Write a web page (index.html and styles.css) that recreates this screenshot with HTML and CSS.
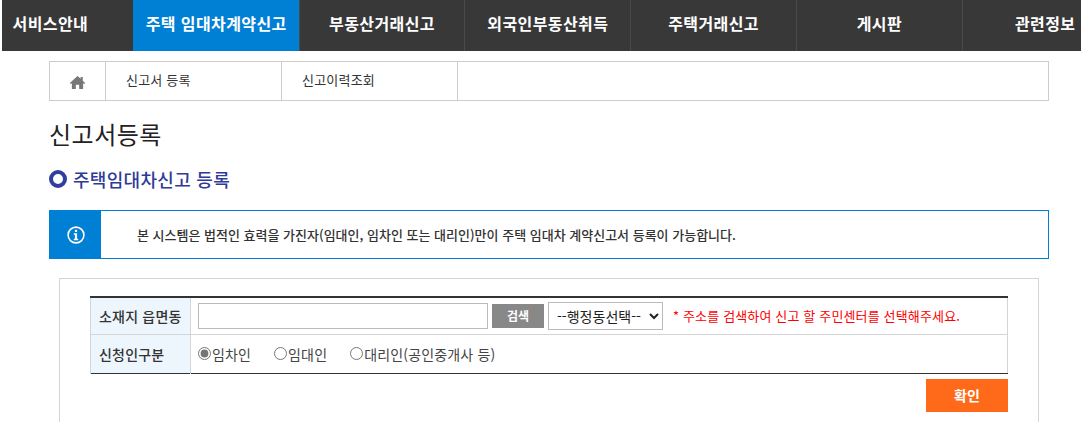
FILE: index.html
```html
<!DOCTYPE html>
<html lang="ko">
<head>
    <meta charset="UTF-8">
    <title>신고서등록</title>
    <link rel="stylesheet" href="styles.css">
</head>
<body>
    <div class="gnb-wrap">
        <ul class="gnb">
            <li>서비스안내</li>
            <li class="on">주택 임대차계약신고</li>
            <li>부동산거래신고</li>
            <li>외국인부동산취득</li>
            <li>주택거래신고</li>
            <li>게시판</li>
            <li>관련정보</li>
        </ul>
    </div>
    <div class="container">
        <div class="tabs">
            <div class="tab-home">
                <svg width="17" height="15" viewBox="0 0 18 16"><path fill="#777" d="M9 1 0.8 8.4 2 9.6 3 8.7V15H7.2V10.5H10.8V15H15V8.7L16 9.6 17.2 8.4 14.6 6V2H12.4V4Z"/></svg>
            </div>
            <div class="tab">신고서 등록</div>
            <div class="tab">신고이력조회</div>
        </div>
        <h1 class="page-title">신고서등록</h1>
        <h2 class="sub-title"><span class="ring"></span>주택임대차신고 등록</h2>
        <div class="notice">
            <div class="notice-icon">
                <svg width="18" height="18" viewBox="0 0 18 18"><circle cx="9" cy="9" r="7.9" fill="none" stroke="#fff" stroke-width="1.6"/><rect x="7.9" y="3.8" width="2.2" height="2.2" fill="#fff"/><path fill="#fff" d="M6.8 7.3H10.1V12.8H11.2V14.2H6.8V12.8H7.9V8.7H6.8Z"/></svg>
            </div>
            <p class="notice-text">본 시스템은 법적인 효력을 가진자(임대인, 임차인 또는 대리인)만이 주택 임대차 계약신고서 등록이 가능합니다.</p>
        </div>
        <div class="form-box">
            <table class="form-table">
                <tr class="row-addr">
                    <th>소재지 읍면동</th>
                    <td>
                        <div class="addr">
                            <input type="text" class="addr-input">
                            <button type="button" class="btn-search">검색</button>
                            <select class="addr-select"><option>--행정동선택--</option></select>
                            <span class="addr-help">* 주소를 검색하여 신고 할 주민센터를 선택해주세요.</span>
                        </div>
                    </td>
                </tr>
                <tr class="row-type">
                    <th>신청인구분</th>
                    <td>
                        <div class="radios">
                            <label><input type="radio" name="kind" checked>임차인</label>
                            <label><input type="radio" name="kind">임대인</label>
                            <label><input type="radio" name="kind">대리인(공인중개사 등)</label>
                        </div>
                    </td>
                </tr>
            </table>
            <div class="form-btns">
                <button type="button" class="btn-ok">확인</button>
            </div>
        </div>
    </div>
</body>
</html>
```

FILE: styles.css
```css
* {
    margin: 0;
    padding: 0;
    box-sizing: border-box;
    font-family: "Noto Sans CJK KR", "Noto Sans", sans-serif;
}

html, body {
    height: 422px;
    overflow: hidden;
}

body {
    background: #fff;
    color: #333;
}

.gnb-wrap {
    margin-left: 2px;
    height: 51px;
    background: #383838;
    overflow: hidden;
}
.gnb {
    display: flex;
    list-style: none;
    margin-left: -35px;
    width: 1300px;
}
.gnb li {
    flex: 0 0 165.8px;
    height: 51px;
    line-height: 46px;
    text-align: center;
    font-size: 16px;
    font-weight: 700;
    letter-spacing: 0.4px;
    color: #fff;
    border-left: 1px solid #4a4a4a;
}
.gnb li.on {
    background: #0080d4;
    border-left-color: #0080d4;
}

.container {
    width: 1000px;
    margin-left: 49px;
}

.tabs {
    display: flex;
    height: 40px;
    margin-top: 10px;
    border: 1px solid #ccc;
}
.tab-home {
    flex: 0 0 56px;
    display: flex;
    align-items: center;
    justify-content: center;
    padding-top: 3px;
    border-right: 1px solid #ccc;
}
.tab {
    flex: 0 0 176px;
    padding-left: 20px;
    line-height: 36px;
    font-size: 13px;
    letter-spacing: 0.2px;
    color: #333;
    border-right: 1px solid #ccc;
}

.page-title {
    margin-top: 15px;
    height: 36px;
    line-height: 36px;
    font-size: 24px;
    font-weight: 400;
    letter-spacing: 0.5px;
    color: #222;
}
.sub-title {
    display: flex;
    align-items: center;
    margin-top: 13px;
    height: 28px;
    font-size: 18px;
    font-weight: 500;
    letter-spacing: 0.3px;
    color: #2f3b98;
}
.ring {
    width: 18px;
    height: 18px;
    margin-right: 6px;
    border: 4px solid #2f3f9e;
    border-radius: 50%;
}

.notice {
    display: flex;
    align-items: center;
    height: 49px;
    margin-top: 17px;
    border: 1px solid #0080d4;
}
.notice-icon {
    flex: 0 0 51px;
    height: 100%;
    display: flex;
    align-items: center;
    justify-content: center;
    background: #0080d4;
}
.notice-text {
    padding-left: 36px;
    font-size: 13px;
    font-weight: 500;
    color: #333;
}

.form-box {
    margin: 19px 10px 0;
    height: 200px;
    padding: 17px 30px 0;
    border: 1px solid #d5d5d5;
}
.form-table {
    width: 918px;
    border-collapse: collapse;
    border-top: 2px solid #333;
    border-bottom: 1px solid #333;
    border-right: 1px solid #d5d5d5;
    table-layout: fixed;
    font-size: 14px;
}
.form-table th {
    width: 100px;
    padding-left: 8px;
    text-align: left;
    font-size: 14px;
    font-weight: 500;
    letter-spacing: 0.2px;
    color: #333;
    background: #eef6fd;
    border-left: 1px solid #d5d5d5;
    border-right: 1px solid #d5d5d5;
}
.row-addr th, .row-addr td {
    height: 37px;
    border-bottom: 1px solid #d5d5d5;
}
.row-type th, .row-type td {
    height: 39px;
}
.form-table td {
    padding-left: 7px;
}

.addr {
    display: flex;
    align-items: center;
}
.addr-input {
    width: 290px;
    height: 26px;
    border: 1px solid #bbb;
    background: #fff;
}
.btn-search {
    width: 52px;
    height: 24px;
    margin-left: 4px;
    border: 0;
    background: #888;
    color: #fff;
    font-size: 12px;
    font-weight: 700;
}
.addr-select {
    width: 115px;
    height: 28px;
    margin-left: 4px;
    padding-left: 4px;
    border: 1px solid #bbb;
    background: #fff;
    color: #222;
    font-size: 14px;
}
.addr-help {
    margin-left: 10px;
    font-size: 13px;
    letter-spacing: 0.15px;
    color: #f00;
}

.radios {
    display: flex;
    gap: 23px;
    color: #444;
    font-size: 14px;
    letter-spacing: 0.15px;
}
.radios label {
    display: flex;
    align-items: center;
}
.radios input {
    width: 13px;
    height: 13px;
    margin-right: 1px;
    accent-color: #757575;
}

.form-btns {
    display: flex;
    justify-content: flex-end;
    margin-top: 5px;
    width: 918px;
}
.btn-ok {
    width: 82px;
    height: 33px;
    border: 0;
    background: #ff6a1a;
    color: #fff;
    font-size: 14px;
    font-weight: 700;
}
```
